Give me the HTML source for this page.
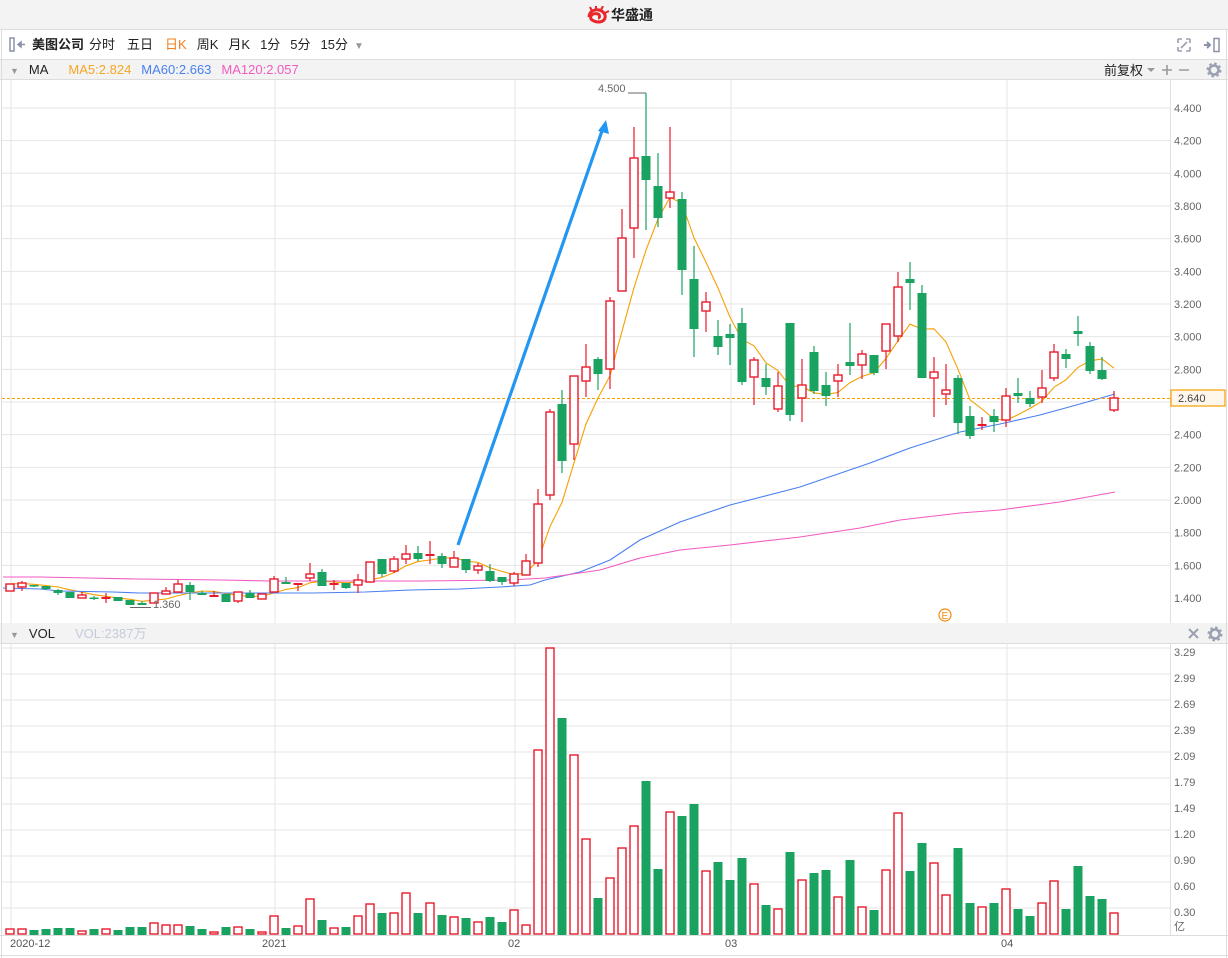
<!DOCTYPE html>
<html><head><meta charset="utf-8">
<style>
*{margin:0;padding:0;box-sizing:border-box}
body{width:1228px;height:958px;overflow:hidden;background:#fff;font-family:"Liberation Sans","Noto Sans CJK SC",sans-serif;position:relative}
.abs{position:absolute}
</style></head><body>
<div class="abs" style="left:0;top:0;width:1228px;height:30px;background:#f3f3f3;border-bottom:1px solid #ddd"></div>
<svg class="abs" style="left:586px;top:6px" width="24" height="18" viewBox="0 0 24 18">
<path d="M3 11 C3 5 9 3 13 4 C17 5 20 8 19 12 C18 16 12 17 8 15 C5 14 4 12 5 10 C6 8 9 7 12 8 C14 9 14 12 12 12" fill="none" stroke="#e8262b" stroke-width="3"/>
<path d="M6 5 L4 1 M10 3 L10 0 M15 4 L17 0 M19 7 L23 5" stroke="#e8262b" stroke-width="2"/>
</svg>
<div class="abs" style="left:611px;top:6px;font-size:14px;font-weight:bold;color:#222;font-family:'Noto Sans CJK SC',sans-serif;line-height:18px">华盛通</div>

<div class="abs" style="left:0;top:30px;width:1228px;height:30px;background:#fff;border-bottom:1px solid #ddd"></div>
<svg class="abs" style="left:8px;top:37px" width="20" height="16"><rect x="2" y="1" width="4" height="13" fill="none" stroke="#8a92a6" stroke-width="1.5"/><path d="M10 7.5 H17 M10 7.5 L13 5 V10 Z" stroke="#8a92a6" stroke-width="1.5" fill="#8a92a6"/></svg>
<div class="abs" style="left:32px;top:36px;font-size:13px;line-height:18px;color:#222;white-space:nowrap;font-family:'Liberation Sans','Noto Sans CJK SC',sans-serif">
<b>美图公司</b><span style="margin-left:5px">分时</span><span style="margin-left:12px">五日</span><span style="margin-left:12px;color:#f07f1f">日K</span><span style="margin-left:10px">周K</span><span style="margin-left:10px">月K</span><span style="margin-left:10px">1分</span><span style="margin-left:10px">5分</span><span style="margin-left:10px">15分</span><span style="margin-left:6px;color:#999;font-size:10px">▼</span></div>
<svg class="abs" style="left:1176px;top:37px" width="50" height="16"><path d="M2 2 H6 M2 2 V6 M14 2 H10 M14 2 V6 M2 14 H6 M2 14 V10 M14 14 H10 M14 14 V10 M5 11 L11 5" stroke="#9aa0b0" stroke-width="1.6" fill="none"/><path d="M28 8 H34 M31 5 L34 8 L31 11" stroke="#8a92a6" stroke-width="2" fill="none"/><rect x="38" y="1.5" width="5" height="13" fill="none" stroke="#8a92a6" stroke-width="1.5"/></svg>

<div class="abs" style="left:0;top:60px;width:1228px;height:20px;background:#f3f3f3;border-bottom:1px solid #ddd"></div>
<div class="abs" style="left:10px;top:62px;font-size:13px;line-height:16px;white-space:nowrap"><span style="color:#999;font-size:9px">▼</span><span style="margin-left:10px;color:#222">MA</span><span style="margin-left:20px;color:#f5a623">MA5:2.824</span><span style="margin-left:10px;color:#4a7ff0">MA60:2.663</span><span style="margin-left:10px;color:#f25ac0">MA120:2.057</span></div>
<div class="abs" style="left:1104px;top:62px;font-size:13px;line-height:16px;color:#222;font-family:'Noto Sans CJK SC',sans-serif">前复权</div>
<svg class="abs" style="left:1146px;top:62px" width="80" height="16"><path d="M1 6 H9 L5 10 Z" fill="#999"/><path d="M16 8 H26 M21 3 V13 M33 8 H43" stroke="#999" stroke-width="1.6"/><circle cx="68" cy="8" r="4.5" fill="none" stroke="#9aa0b0" stroke-width="2.5"/><circle cx="68" cy="8" r="6.5" fill="none" stroke="#9aa0b0" stroke-width="2" stroke-dasharray="2.5 2.6"/></svg>

<div class="abs" style="left:0;top:623px;width:1228px;height:21px;background:#f3f3f3;border-bottom:1px solid #ddd"></div>
<div class="abs" style="left:10px;top:626px;font-size:13px;line-height:16px;white-space:nowrap"><span style="color:#999;font-size:9px">▼</span><span style="margin-left:10px;color:#222">VOL</span><span style="margin-left:20px;color:#c5cbdb;font-family:'Liberation Sans','Noto Sans CJK SC',sans-serif">VOL:2387万</span></div>
<svg class="abs" style="left:1186px;top:626px" width="40" height="16"><path d="M3 3 L12 12 M12 3 L3 12" stroke="#9aa0b0" stroke-width="2"/><circle cx="29" cy="8" r="4.5" fill="none" stroke="#9aa0b0" stroke-width="2.5"/><circle cx="29" cy="8" r="6.5" fill="none" stroke="#9aa0b0" stroke-width="2" stroke-dasharray="2.5 2.6"/></svg>

<svg id="ch" class="abs" style="left:0;top:0" width="1228" height="958" xmlns="http://www.w3.org/2000/svg">
<g id="grid"></g>
<g id="ma"></g>
<g id="cd"></g>
<g id="tx" font-family="Liberation Sans, sans-serif" font-size="11" fill="#666">
<text x="598" y="92">4.500</text>
<text x="153" y="608">1.360</text>
<text x="10" y="947" fill="#555">2020-12</text>
<text x="262" y="947" fill="#555">2021</text>
<text x="508" y="947" fill="#555">02</text>
<text x="725" y="947" fill="#555">03</text>
<text x="1001" y="947" fill="#555">04</text>
</g>
</svg>
<script>
var S='http://www.w3.org/2000/svg';
function el(p,t,a){var e=document.createElementNS(S,t);for(var k in a)e.setAttribute(k,a[k]);document.getElementById(p).appendChild(e);return e;}
for(var i=0;i<16;i++){var y=75.3+i*32.67;if(y<82||y>602)continue;el('grid','line',{x1:2,x2:1170,y1:y,y2:y,stroke:'#e6e6e6'});}
for(var i=0;i<11;i++){var y=648+i*26;el('grid','line',{x1:2,x2:1170,y1:y,y2:y,stroke:'#e6e6e6'});}
[11,275,515,731,1007].forEach(function(x){el('grid','line',{x1:x,x2:x,y1:80,y2:623,stroke:'#e6e6e6'});el('grid','line',{x1:x,x2:x,y1:644,y2:935,stroke:'#e6e6e6'});});
el('grid','line',{x1:1170.5,x2:1170.5,y1:80,y2:623,stroke:'#e0e0e0'});
el('grid','line',{x1:1170.5,x2:1170.5,y1:644,y2:935,stroke:'#e0e0e0'});
el('grid','line',{x1:1.5,x2:1.5,y1:30,y2:958,stroke:'#ddd'});
el('grid','line',{x1:1226.5,x2:1226.5,y1:30,y2:958,stroke:'#ddd'});
el('grid','line',{x1:0,x2:1228,y1:935.5,y2:935.5,stroke:'#ddd'});
el('grid','line',{x1:0,x2:1228,y1:955.5,y2:955.5,stroke:'#ddd'});
var pl=['4.400','4.200','4.000','3.800','3.600','3.400','3.200','3.000','2.800','2.600','2.400','2.200','2.000','1.800','1.600','1.400'];
pl.forEach(function(t,i){var y=108+i*32.67;if(t=='2.600')return;var e=el('tx','text',{x:1174,y:y+4});e.textContent=t;});
var vl=['3.29','2.99','2.69','2.39','2.09','1.79','1.49','1.20','0.90','0.60','0.30'];
vl.forEach(function(t,i){var e=el('tx','text',{x:1174,y:656+i*26});e.textContent=t;});
var yy=el('tx','text',{x:1174,y:930});yy.textContent='亿';yy.setAttribute('font-family','Noto Sans CJK SC, sans-serif');
var D=[
['r',584,591,584,591,929],['r',583,587,581,591,929],['g',585,586,585,587,930],['g',586,589,586,590,929],['g',590,593,589,595,928],['g',592,598,592,598,928],['r',595,598,592,598,931],['g',597.5,598.5,596,600,929],['R',597,599,593,603,929],['g',597,601,597,601,930],['g',600,605,600,605,927],['g',603,605,601,605,927],['r',593,603,593,603,923],['r',591,594,587,594,925],['r',584,592,580,592,925],['g',585,592,582,600,926],['g',593,595,591,595,929],['R',595,597,591,597,932],['g',594,602,594,602,927],['r',592,601,592,603,927],['g',593,598,590,598,929],['r',594,599,594,599,932],
['r',579,592,576,592,916],['g',582,584,577,584,928],['R',583,585,583,591,926],['r',574,578,563,581,899],['g',572,586,569,586,920],['R',583,585,580,590,928],['g',583,588,583,589,927],['r',580,585,574,593,916],['r',562,582,562,582,904],['g',559,574,559,577,913],['r',559,571,556,573,913],['r',554,559,545,564,893],['g',553,559,546,561,913],['R',554,556,541,564,903],['g',556,564,553,568,915],['r',558,567,551,567,917],['g',559,570,559,573,918],['r',566,570,563,574,922],['g',571,581,564,582,917],['g',577,582,577,585,922],['r',574,583,572,586,910],['r',561,575,554,575,925],
['r',504,563,489,567,750],['r',412,495,409,500,648],['g',404,461,390,473,718],['r',376,444,376,460,755],['r',367,381,344,397,839],['g',359,374,357,390,898],['r',301,369,297,389,878],['r',238,291,209,291,848],['r',158,228,127,258,826],['g',156,180,93,230,781],['g',186,218,153,227,869],['r',192,198,127,208,812],['g',199,270,192,295,816],['g',279,329,246,357,804],['r',302,311,292,332,871],['g',336,347,320,355,862],['g',334,338,324,365,880],
['g',323,382,308,385,858],['r',360,377,357,405,884],['g',378,387,364,395,905],['r',386,409,372,412,909],['g',323,415,323,421,852],['r',385,398,359,422,880],['g',352,391,346,394,873],['g',385,396,372,406,870],['r',375,381,364,397,897],['g',362,366,323,375,860],['r',354,365,350,379,907],['g',355,373,355,375,910],['r',324,351,324,369,870],['r',287,336,272,342,813],['g',279,283,262,310,871],['g',293,378,285,378,843],['r',372,378,357,417,863],['r',390,394,364,405,895],['g',378,423,375,434,848],['g',416,436,406,439,903],['R',424,426,417,430,907],
['g',416,422,409,432,903],['r',396,420,388,427,889],['g',393,396,378,403,909],['g',398,404,391,407,916],['r',388,397,370,403,903],['r',352,378,344,381,881],['g',354,359,349,368,909],['g',331,334,316,346,866],['g',346,371,342,374,896],['g',370,379,357,380,899],['r',398,410,391,412,913]
];
var closes=[];
D.forEach(function(d,i){var x=10+12*i;var c=d[0],col=(c=='g')?'#1aa260':'#e8192c';
 el('cd','line',{x1:x,x2:x,y1:d[3],y2:d[4],stroke:col,'stroke-width':1.2});
 var h=Math.max(d[2]-d[1],1.5);
 if(c=='r'){el('cd','rect',{x:x-4,y:d[1],width:8,height:h,fill:'#fff',stroke:col,'stroke-width':1.4});}
 else{el('cd','rect',{x:x-4.5,y:d[1],width:9,height:h,fill:col});}
 if(c=='r'||c=='R'){closes.push(d[1]);el('cd','rect',{x:x-4,y:d[5],width:8,height:934-d[5],fill:'#fff',stroke:col,'stroke-width':1.4});}
 else{closes.push(d[2]);el('cd','rect',{x:x-4.5,y:d[5],width:9,height:935-d[5],fill:col});}
});
var pts=[];closes.forEach(function(c,i){var s=0,n=0;for(var j=Math.max(0,i-4);j<=i;j++){s+=closes[j];n++;}pts.push((10+12*i)+','+(s/n).toFixed(1));});
el('ma','polyline',{points:pts.join(' '),fill:'none',stroke:'#f5a000','stroke-width':1.1});
el('ma','polyline',{points:'3,588 40,589 60,591 113,592 140,593 275,593 313,593 365,592 410,590 460,589 500,587 530,585 545,580 580,572 610,560 640,540 680,522 730,505 800,487 870,463 910,448 960,432 1000,424 1040,415 1080,404 1115,394',fill:'none',stroke:'#4a7ff0','stroke-width':1.1});
el('ma','polyline',{points:'3,577 40,577 88,578 137,579 222,580 270,581 330,581 420,581 510,580 545,578 600,570 640,558 680,550 730,545 800,537 860,528 900,520 960,513 1000,510 1060,502 1115,492',fill:'none',stroke:'#f25ac0','stroke-width':1.1});
el('ma','line',{x1:2,x2:1170,y1:398.5,y2:398.5,stroke:'#f5a000','stroke-width':1,'stroke-dasharray':'3 2'});
el('ma','rect',{x:1171,y:390,width:54,height:16,fill:'#fff7ec',stroke:'#f5a000','stroke-width':1.2});
var t=el('tx','text',{x:1178,y:402,fill:'#444'});t.textContent='2.640';
el('ma','polyline',{points:'628,93 646,93',fill:'none',stroke:'#666'});
el('ma','line',{x1:130,x2:151,y1:607.5,y2:607.5,stroke:'#666'});
el('ma','line',{x1:458,y1:545,x2:603,y2:128,stroke:'#2196f3','stroke-width':3.2});
el('ma','path',{d:'M606 120 L598 131 L609 134 Z',fill:'#2196f3'});
el('ma','circle',{cx:945,cy:615,r:6,fill:'none',stroke:'#f5880f','stroke-width':1.2});
var e=el('tx','text',{x:941.5,y:619,fill:'#f5880f','font-size':10});e.textContent='E';
</script>
</body></html>
